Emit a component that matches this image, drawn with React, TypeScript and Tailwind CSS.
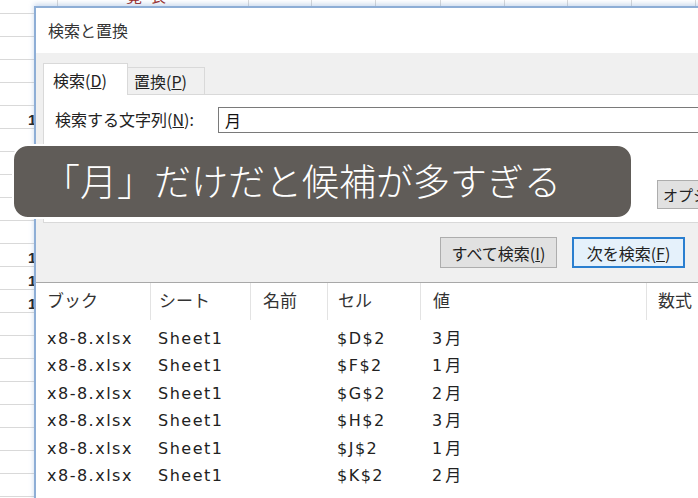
const ui = "font-['Noto_Sans_CJK_JP',sans-serif]"
const data = "font-['DejaVu_Sans','Noto_Sans_CJK_JP',sans-serif]"

const sheetCols = [58, 191, 63, 64, 65, 64, 63, 64, 64]
const sheetRows = Array.from({ length: 22 }, (_, i) => i)
const digitRows = [5, 11, 12, 13]

const columns = [
  { label: 'ブック', cls: 'w-[114px] pl-[11px]' },
  { label: 'シート', cls: 'w-[100px] pl-[8px] border-l border-[#e3e3e3]' },
  { label: '名前', cls: 'w-[77px] pl-[12px] border-l border-[#e3e3e3]' },
  { label: 'セル', cls: 'w-[93px] pl-[10px] border-l border-[#e3e3e3]' },
  { label: '値', cls: 'w-[226px] pl-[12px] border-l border-[#e3e3e3]' },
  { label: '数式', cls: 'w-[120px] pl-[11px] border-l border-[#e3e3e3]' },
]

const results = [
  { cell: '$D$2', value: '3月' },
  { cell: '$F$2', value: '1月' },
  { cell: '$G$2', value: '2月' },
  { cell: '$H$2', value: '3月' },
  { cell: '$J$2', value: '1月' },
  { cell: '$K$2', value: '2月' },
]

function Sheet() {
  return (
    <div className="flex flex-col">
      {sheetRows.map((r) => (
        <div
          key={r}
          className={`flex shrink-0 border-b border-[#d9d9d9] ${r === 0 ? 'h-[14px]' : 'h-[23px]'}`}
        >
          {sheetCols.map((w, c) => (
            <div
              key={c}
              className="relative shrink-0 border-r border-[#d9d9d9]"
              style={{ width: w }}
            >
              {r === 0 && c === 1 && (
                <span className="absolute left-[44px] top-[-13px] text-[16px] leading-[16px] tracking-[8px] text-[#9c2a26] font-['Noto_Sans_CJK_JP',sans-serif]">
                  一覧表
                </span>
              )}
              {c === 0 && digitRows.includes(r) && (
                <span className="absolute bottom-[1px] left-[28px] text-[15px] font-bold leading-none text-[#222] font-['Liberation_Sans',sans-serif]">
                  12
                </span>
              )}
            </div>
          ))}
        </div>
      ))}
    </div>
  )
}

function Dialog() {
  return (
    <div
      className={`absolute left-[34px] top-[6px] w-[760px] h-[520px] border-l-2 border-t-2 border-[#8eaed6] bg-[#f0f0f0] shadow-[0_-2px_5px_rgba(110,150,205,0.35)] ${ui}`}
    >
      <div className="flex h-[45px] items-center bg-white pl-[12px] pb-[2px] text-[16px] leading-none text-[#333]">
        検索と置換
      </div>

      <div className="flex pl-[7px] pt-[10px]">
        <div className="relative z-10 -mb-px flex h-[32px] w-[85px] items-center border border-b-0 border-[#d9d9d9] bg-white pl-[9px] text-[16px] leading-none text-[#222]">
          検索(<u>D</u>)
        </div>
        <div className="mt-[4px] flex h-[27px] w-[77px] items-center border border-l-0 border-b-0 border-[#d9d9d9] bg-[#f0f0f0] pl-[6px] text-[16px] leading-none text-[#222]">
          置換(<u>P</u>)
        </div>
      </div>

      <div className="ml-[7px] flex h-[129px] flex-col border border-[#d9d9d9] bg-white pl-[11px] pt-[12px]">
        <div className="flex items-center">
          <div className="w-[163px] pb-[3px] text-[16px] leading-none text-[#222]">
            検索する文字列(<u>N</u>):
          </div>
          <div className="flex h-[26px] w-[560px] items-center border border-[#7a7a7a] bg-white pl-[6px] text-[16px] leading-none text-[#111]">
            月
          </div>
        </div>
        <div className="ml-[602px] mt-[47px] flex h-[29px] w-[130px] items-center whitespace-nowrap border border-[#adadad] bg-[#e1e1e1] pl-[5px] text-[15px] leading-none text-[#222]">
          オプション(<u>T</u>) &gt;&gt;
        </div>
      </div>

      <div className="flex gap-[15px] pl-[404px] pt-[14px]">
        <div className="flex h-[31px] w-[117px] items-center justify-center whitespace-nowrap border border-[#adadad] bg-[#e1e1e1] text-[16px] leading-none text-[#222]">
          すべて検索(<u>I</u>)
        </div>
        <div className="flex h-[31px] w-[113px] items-center justify-center whitespace-nowrap border-2 border-[#2a7fd0] bg-[#e5f1fb] text-[16px] leading-none text-[#222]">
          次を検索(<u>F</u>)
        </div>
      </div>

      <div className="mt-[14px] h-[260px] border-t border-[#a8a8a8] bg-white">
        <div className="flex h-[42px] items-start">
          {columns.map((col) => (
            <div
              key={col.label}
              className={`flex h-[37px] shrink-0 items-start pt-[7px] text-[17px] leading-[20px] text-[#333] ${col.cls}`}
            >
              {col.label}
            </div>
          ))}
        </div>
        {results.map((row) => (
          <div
            key={row.cell}
            className={`flex h-[27.5px] items-center text-[16px] leading-none tracking-[1.5px] text-[#222] ${data}`}
          >
            <div className="w-[114px] shrink-0 pl-[11px]">x8-8.xlsx</div>
            <div className="w-[100px] shrink-0 pl-[8px]">Sheet1</div>
            <div className="w-[77px] shrink-0 pl-[12px]"></div>
            <div className="w-[93px] shrink-0 pl-[10px]">{row.cell}</div>
            <div className="w-[226px] shrink-0 pl-[12px] tracking-[3px]">{row.value}</div>
          </div>
        ))}
      </div>
    </div>
  )
}

export default function App() {
  return (
    <div className="relative h-[498px] w-[698px] overflow-hidden bg-white">
      <Sheet />
      <Dialog />
      <div className="absolute left-[12px] top-[144px] flex h-[75px] w-[621px] items-center rounded-[16px] border-2 border-white bg-[#605c58] pl-[29px] pb-[2px]">
        <span className="whitespace-nowrap text-[37px] font-light leading-none text-white font-['Noto_Sans_CJK_JP',sans-serif]">
          「月」だけだと候補が多すぎる
        </span>
      </div>
    </div>
  )
}
